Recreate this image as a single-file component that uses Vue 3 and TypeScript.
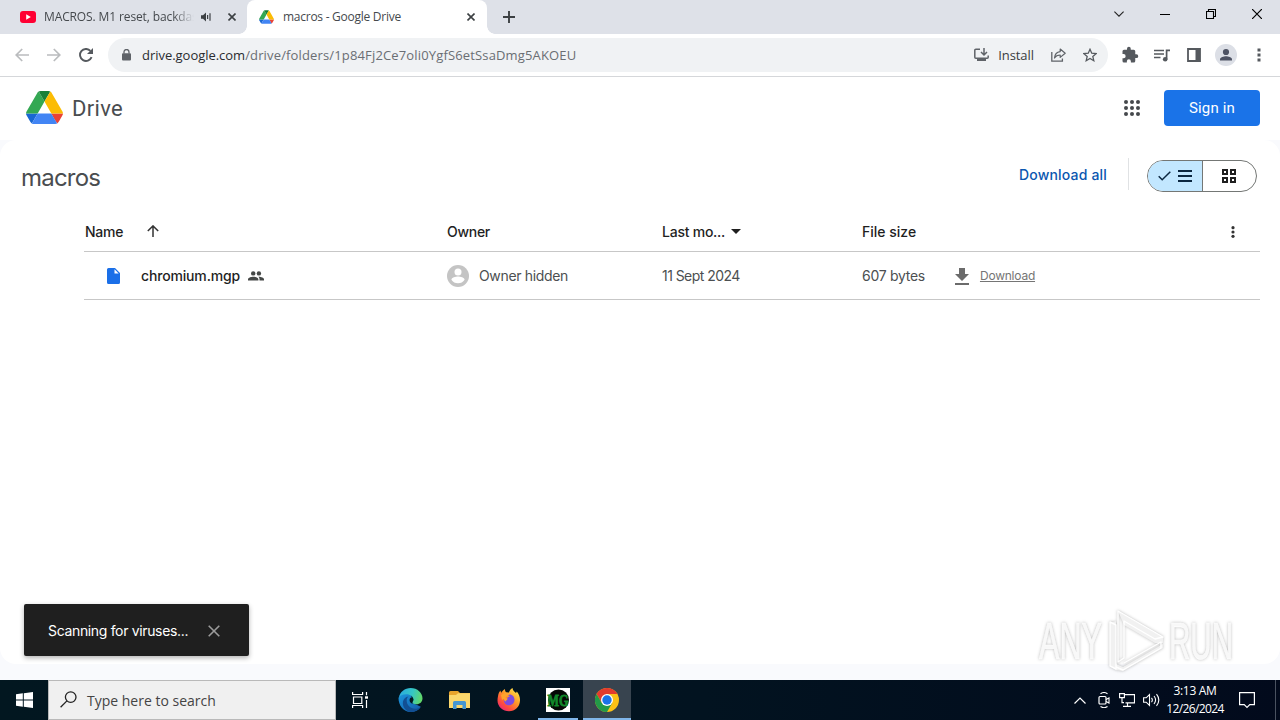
<script setup lang="ts">
import { ref } from 'vue'

interface DriveFile {
  name: string
  owner: string
  modified: string
  size: string
}

const files = ref<DriveFile[]>([
  { name: 'chromium.mgp', owner: 'Owner hidden', modified: '11 Sept 2024', size: '607 bytes' },
])
const dots = [0, 1, 2, 3, 4, 5, 6, 7, 8]
const toastOpen = ref(true)
</script>

<template>
  <div class="screen">
    <header class="tabs">
      <div class="tab first">
        <svg class="yt" width="16" height="12" viewBox="0 0 16 12"><rect width="16" height="12" rx="3" fill="#ff0033" /><path d="M6.2 3.3v5.4L10.8 6z" fill="#fff" /></svg>
        <span class="title t1">MACROS. M1 reset, backdas</span>
        <svg class="snd" width="11" height="10" viewBox="0 0 11 10"><path d="M0 3.2h2L5 .6v8.8L2 6.8H0z" fill="#3c4043" /><path d="M6.6 3v4M9 1.2v7.6" stroke="#3c4043" stroke-width="1.2" /></svg>
        <svg class="x x1" width="8" height="8" viewBox="0 0 8 8"><path d="M.5.5l7 7M7.5.5l-7 7" stroke="#3c4043" stroke-width="1.6" /></svg>
      </div>
      <div class="tab active">
        <svg class="fav" width="15" height="14" viewBox="0 0 87.3 78"><use href="#drive-mark" /></svg>
        <span class="title t2">macros - Google Drive</span>
        <svg class="x x2" width="8" height="8" viewBox="0 0 8 8"><path d="M.5.5l7 7M7.5.5l-7 7" stroke="#3c4043" stroke-width="1.6" /></svg>
      </div>
      <svg class="plus" width="12" height="12" viewBox="0 0 12 12"><path d="M6 0v12M0 6h12" stroke="#3c4043" stroke-width="1.9" /></svg>
      <div class="winctl">
        <svg width="10" height="6" viewBox="0 0 10 6"><path d="M.4.6L5 5.2 9.6.6" fill="none" stroke="#222" stroke-width="1.1" /></svg>
        <svg width="10" height="10" viewBox="0 0 10 10"><path d="M0 5.5h10" stroke="#000" /></svg>
        <svg width="10" height="10" viewBox="0 0 10 10"><path d="M.5 2.5h7v7h-7zM2.5 2.5v-2h7v7h-2" fill="none" stroke="#000" stroke-width="1.1" /></svg>
        <svg width="10" height="10" viewBox="0 0 10 10"><path d="M0 0l10 10M10 0L0 10" stroke="#000" stroke-width="1.2" /></svg>
      </div>
    </header>

    <div class="toolbar">
      <svg class="nav" width="14" height="14" viewBox="0 0 14 14"><path d="M14 7H1.2M7.2 1L1.2 7l6 6" fill="none" stroke="#babcbe" stroke-width="1.7" /></svg>
      <svg class="nav" width="14" height="14" viewBox="0 0 14 14"><path d="M0 7h12.8M6.8 1l6 6-6 6" fill="none" stroke="#babcbe" stroke-width="1.7" /></svg>
      <svg class="nav" width="14" height="14" viewBox="0 0 14 14"><path d="M12.6 9.2A6 6 0 1 1 11.4 2.8" fill="none" stroke="#55595e" stroke-width="1.9" /><path d="M14 0v6H8z" fill="#55595e" /></svg>
      <div class="omnibox">
        <svg class="lock" width="9" height="12" viewBox="0 0 9 12"><rect y="4.2" width="9" height="7.3" rx="1" fill="#5f6368" /><path d="M2 4.6V3a2.5 2.5 0 0 1 5 0v1.600" fill="none" stroke="#5f6368" stroke-width="1.3" /></svg>
        <span class="host">drive.google.com</span><span class="path">/drive/folders/1p84Fj2Ce7oli0YgfS6etSsaDmg5AKOEU</span>
        <svg class="inst" width="15" height="14" viewBox="0 0 15 14"><path d="M6 1.2H1.8a1 1 0 0 0-1 1v7a1 1 0 0 0 1 1h11.4a1 1 0 0 0 1-1V7.4" fill="none" stroke="#5f6368" stroke-width="1.5" /><path d="M10 0v6M7 4l3 3 3-3" fill="none" stroke="#5f6368" stroke-width="1.5" /><path d="M3 11h9v2H3z" fill="#5f6368" /></svg>
        <span class="install">Install</span>
        <svg class="share" width="15" height="14" viewBox="0 0 15 14"><path d="M.8 4v9.2h10.6v-2.6" fill="none" stroke="#5f6368" stroke-width="1.3" /><path d="M9.2 1l5 4.2-5 4.2V7C6.4 7 4.7 8 3.5 10c.3-3.500 2.200-6 5.700-6.400z" fill="none" stroke="#5f6368" stroke-width="1.2" stroke-linejoin="round" /></svg>
        <svg class="star" width="14" height="14" viewBox="0 0 24 24"><path d="M12 2.2l3 6.800 7.400.7-5.600 4.900 1.700 7.200L12 18l-6.500 3.800 1.700-7.200-5.600-4.900L9 9z" fill="none" stroke="#55595e" stroke-width="2.200" /></svg>
      </div>
      <svg class="ext" width="18" height="18" viewBox="0 0 24 24"><path d="M20.500 11H19V7a2 2 0 0 0-2-2h-4V3.500a2.500 2.500 0 0 0-5 0V5H4a2 2 0 0 0-2 2v3.800h1.500a2.700 2.700 0 0 1 0 5.400H2V20a2 2 0 0 0 2 2h3.800v-1.500a2.700 2.700 0 0 1 5.400 0V22H17a2 2 0 0 0 2-2v-4h1.500a2.500 2.500 0 0 0 0-5z" fill="#55595e" /></svg>
      <svg class="media" width="16" height="13" viewBox="0 0 16 13"><path d="M0 1.500h10M0 5h10M0 8.500h6.500" stroke="#55595e" stroke-width="1.600" /><path d="M12.600 10V1.300H16" fill="none" stroke="#55595e" stroke-width="1.700" /><circle cx="11.200" cy="10.300" r="2.300" fill="#55595e" /></svg>
      <svg class="side" width="14" height="14" viewBox="0 0 14 14"><path d="M1 1h12v12H1z" fill="none" stroke="#55595e" stroke-width="1.800" /><path d="M8.500 1H13v12H8.500z" fill="#55595e" /></svg>
      <svg class="profile" width="22" height="22" viewBox="0 0 22 22"><circle cx="11" cy="11" r="11" fill="#dcdfe6" /><circle cx="11" cy="8" r="3.100" fill="#4d5263" /><path d="M5 16.500v-1.300c0-2 3.800-3 6-3s6 1 6 3v1.300z" fill="#4d5263" /></svg>
      <svg class="kebab" width="4" height="14" viewBox="0 0 4 14"><path d="M.5.500h3v3h-3zM.5 5.500h3v3h-3zM.5 10.500h3v3h-3z" fill="#55595e" /></svg>
    </div>

    <div class="gbar">
      <svg class="logo" width="37" height="33" viewBox="0 0 87.3 78">
        <g id="drive-mark">
          <path d="M6.600 66.850l3.850 6.650c.8 1.400 1.950 2.500 3.300 3.300L27.500 53H0c0 1.550.4 3.100 1.200 4.500z" fill="#1967d2" />
          <path d="M43.650 25L29.900 1.200c-1.350.8-2.500 1.900-3.300 3.300L1.200 48.500A9.060 9.060 0 0 0 0 53h27.500z" fill="#34a853" />
          <path d="M73.550 76.800c1.350-.8 2.500-1.900 3.300-3.300l1.600-2.750L86.100 57.500c.8-1.400 1.200-2.950 1.200-4.500H59.800l5.850 11.500z" fill="#ea4335" />
          <path d="M43.650 25L57.400 1.200C56.050.4 54.500 0 52.900 0H34.400c-1.600 0-3.150.45-4.500 1.200z" fill="#188038" />
          <path d="M59.800 53H27.500L13.750 76.800c1.350.8 2.900 1.200 4.500 1.200h50.800c1.600 0 3.150-.45 4.500-1.200z" fill="#4285f4" />
          <path d="M73.400 26.500L60.700 4.500c-.8-1.400-1.950-2.500-3.300-3.300L43.650 25l16.150 28h27.450c0-1.550-.4-3.100-1.200-4.500z" fill="#fbbc04" />
        </g>
      </svg>
      <span class="brand">Drive</span>
      <svg class="apps" width="16" height="16" viewBox="0 0 16 16"><circle v-for="d in dots" :key="d" :cx="2 + (d % 3) * 6" :cy="2 + Math.floor(d / 3) * 6" r="2" fill="#45484c" /></svg>
      <button class="signin">Sign in</button>
    </div>

    <div class="page">
      <main class="panel">
        <div class="heading">
          <h1>macros</h1>
          <a class="dlall">Download all</a>
          <i class="rule"></i>
          <div class="toggle">
            <div class="half on">
              <svg width="13" height="10" viewBox="0 0 13 10"><path d="M.7 5.200l3.500 3.500L12.300.8" fill="none" stroke="#0b2740" stroke-width="1.500" /></svg>
              <svg width="14" height="12" viewBox="0 0 14 12"><path d="M0 1h14M0 6h14M0 11h14" stroke="#0b2740" stroke-width="2" /></svg>
            </div>
            <div class="half">
              <svg width="14" height="14" viewBox="0 0 14 14"><path d="M1 1h4v4H1zM9 1h4v4H9zM1 9h4v4H1zM9 9h4v4H9z" fill="none" stroke="#1f1f1f" stroke-width="2" /></svg>
            </div>
          </div>
        </div>

        <div class="table">
          <div class="row head">
            <div class="cell"><span class="h-name">Name</span>
              <svg class="up" width="12" height="12" viewBox="0 0 12 12"><path d="M6 12V1M.8 6L6 .9 11.200 6" fill="none" stroke="#333" stroke-width="1.500" /></svg>
            </div>
            <div class="cell"><span class="h-owner">Owner</span></div>
            <div class="cell"><span class="h-mod">Last mo...</span>
              <svg class="down" width="10" height="5" viewBox="0 0 10 5"><path d="M0 0h10L5 5z" fill="#1f1f1f" /></svg>
            </div>
            <div class="cell"><span class="h-size">File size</span></div>
            <div class="cell more"><svg width="4" height="12" viewBox="0 0 4 12"><circle cx="2" cy="1.700" r="1.600" fill="#333" /><circle cx="2" cy="6" r="1.600" fill="#333" /><circle cx="2" cy="10.300" r="1.600" fill="#333" /></svg></div>
          </div>
          <div v-for="f in files" :key="f.name" class="row">
            <div class="cell">
              <svg class="doc" width="13" height="16" viewBox="0 0 13 16"><path d="M1.500 0H8l5 5v9.500a1.500 1.500 0 0 1-1.500 1.500h-10A1.500 1.500 0 0 1 0 14.500v-13A1.500 1.500 0 0 1 1.500 0z" fill="#1a6fe8" /><path d="M7.500 1.300V5.500h4.200z" fill="#fff" /></svg>
              <span class="fname">{{ f.name }}</span>
              <svg class="people" width="16" height="10" viewBox="0 0 16 10"><circle cx="5.200" cy="2.400" r="2.200" fill="#444746" /><circle cx="10.900" cy="2.400" r="2.200" fill="#444746" /><path d="M0 9.600V8.200C0 6.600 3.300 5.700 5.200 5.700s5.200.9 5.200 2.500v1.400zM11.500 9.600V8c0-.9-.5-1.600-1.100-2.200C12.500 5.600 16 6.600 16 8.200v1.400z" fill="#444746" /></svg>
            </div>
            <div class="cell">
              <svg class="avatar" width="22" height="22" viewBox="0 0 22 22"><circle cx="11" cy="11" r="11" fill="#c4c4c4" /><circle cx="11" cy="7" r="3.500" fill="#fff" /><path d="M4.400 14.700c0-2.200 4.400-3.300 6.600-3.300s6.600 1.100 6.600 3.300A8 8 0 0 1 11 18.300a8 8 0 0 1-6.600-3.600z" fill="#fff" /></svg>
              <span class="owner">{{ f.owner }}</span>
            </div>
            <div class="cell"><span class="date">{{ f.modified }}</span></div>
            <div class="cell">
              <span class="size">{{ f.size }}</span>
              <svg class="dlicon" width="14" height="17" viewBox="0 0 14 17"><path d="M4 0h6v6h4l-7 7-7-7h4zM0 15h14v2H0z" fill="#6b6b6b" /></svg>
              <a class="dl">Download</a>
            </div>
            <div class="cell"></div>
          </div>
        </div>
      </main>
    </div>

    <div v-if="toastOpen" class="toast">
      <span>Scanning for viruses...</span>
      <svg width="12" height="12" viewBox="0 0 12 12" @click="toastOpen = false"><path d="M.7.7l10.600 10.600M11.300.7L.7 11.300" stroke="#9b9b9b" stroke-width="1.600" /></svg>
    </div>

    <svg class="watermark" width="210" height="74" viewBox="0 0 210 74">
      <g class="wm-text">
        <text x="9" y="53" textLength="63" lengthAdjust="spacingAndGlyphs">ANY</text>
        <text x="139" y="53" textLength="64" lengthAdjust="spacingAndGlyphs">RUN</text>
      </g>
      <g class="wm-mark">
        <path class="wm-face" d="M80 17l6-2V58l7 3 40-23v4L93 65l-7-1-6-4zM88 5l45 26v6l-8 0-31-18z" />
        <path d="M80 16v44l6 3V19zM88 5v51l6-4V15l31 18 8-2zM94 57l37-21v6L93 64l-7-3" />
      </g>
    </svg>

    <footer class="taskbar">
      <div class="start"><svg width="17" height="16" viewBox="0 0 17 16"><path d="M0 2.300L6.800 1.300v6.300H0zM7.800 1.150L17 0v7.600H7.800zM0 8.500h6.800v6.300L0 13.800zM7.800 8.500H17V16l-9.200-1.200z" fill="#fff" /></svg></div>
      <div class="search">
        <svg width="17" height="17" viewBox="0 0 17 17"><circle cx="10.700" cy="6.100" r="5.300" fill="none" stroke="#222" stroke-width="1.300" /><path d="M6.900 9.900L.6 16.200" stroke="#222" stroke-width="1.300" /></svg>
        <span>Type here to search</span>
      </div>
      <div class="app">
        <svg class="tv" width="17" height="16" viewBox="0 0 17 16"><path d="M.6 0v2.500h10V0M1.500 5h8.300v6.500H1.500zM.6 16v-2.500h10V16M14.500 0v3.300M14.500 8v8" fill="none" stroke="#fff" stroke-width="1.200" /><path d="M13 4.300h3v2.400h-3z" fill="#fff" /></svg>
      </div>
      <div class="app edge">
        <svg width="25" height="24" viewBox="0 0 25 24">
          <defs>
            <linearGradient id="eg1" x1="0" y1=".3" x2="1" y2=".5"><stop offset="0" stop-color="#2aa9e0" /><stop offset=".55" stop-color="#35c6c5" /><stop offset="1" stop-color="#62d868" /></linearGradient>
            <linearGradient id="eg2" x1="0" y1="0" x2="1" y2="1"><stop offset="0" stop-color="#1c96dd" /><stop offset="1" stop-color="#135aa8" /></linearGradient>
          </defs>
          <path d="M.5 10C.5 17.500 5.500 24 12.500 24c4.500 0 8-2 10.300-5.300l-8-3.700L13 6 4 5z" fill="url(#eg2)" />
          <path d="M.7 10C2 3.800 6.800 0 12.600 0 19.500 0 24.500 5 24.500 10.300c0 3.700-2.700 6-6 6-2.600 0-4.200-1-4.200-2 0-.7 1-1.200 1-2.800 0-2.700-3-5.200-6.900-5.200C4.600 6.300 1.700 7.800.7 10z" fill="url(#eg1)" />
          <path d="M8.700 12.500c0 4.500 3.500 8.200 8.300 8.200 2.300 0 4.300-.6 5.800-1.800-2 3.200-5.800 5.100-10.300 5.100-5-1-8.500-5.500-7.500-10.500.5-2.500 2.500-4.700 5.500-5-1.200 1-1.800 2.300-1.800 4z" fill="#124f93" />
          <path d="M11.600 12c0-1.300.7-2.400 1.800-2.400 1.300 0 2 1 2 2.200 0 1.300-1 1.800-1 2.600 0 .7.800 1.500 2.300 1.800-2.800 0-5.100-1.700-5.100-4.200z" fill="#021720" />
        </svg>
      </div>
      <div class="app">
        <svg width="22" height="18" viewBox="0 0 22 18"><path d="M0 1.500A1.500 1.500 0 0 1 1.500 0H9l2 2h10v5H0z" fill="#e8a42c" /><path d="M0 4h7l2-1.800h12V17H0z" fill="#fbd76c" /><path d="M4 18v-6.500A1.500 1.500 0 0 1 5.500 10h10a1.500 1.500 0 0 1 1.500 1.500V18h-3.500v-4h-6v4z" fill="#4596d2" /></svg>
      </div>
      <div class="app">
        <svg width="24" height="24" viewBox="0 0 24 24">
          <defs><linearGradient id="ff1" x1=".9" y1=".1" x2=".2" y2="1"><stop offset="0" stop-color="#ffe14a" /><stop offset=".4" stop-color="#ff9a28" /><stop offset=".75" stop-color="#ff4b3e" /><stop offset="1" stop-color="#e8247e" /></linearGradient></defs>
          <path d="M1 8.200C1.200 5.700 2.400 3.500 3.500 2.500c.1 1 .3 1.700.8 2.300C5 3.600 6.500 1.800 8 1c-.2 1.200.2 2.300 1 3.200l3 .3C12.300 2.800 14 .7 15.500 0c.3 2.600 2 3.500 3.500 5l.8-1.500c2 2.500 3.400 5.500 3.200 9C22.800 19 18 23.300 12 23.300S.5 18.800.5 12.500C.5 11 .7 9.500 1 8.200z" fill="url(#ff1)" />
          <path d="M6.800 12c.2 3.300 2.300 5.300 5.200 5.300 3.300 0 5.500-2.500 5.500-5.500 0-2.700-1.700-4.800-4-5.300-1.200-.2-2 .1-2.700.7.700.1 1.700.6 2 1.300-1.500 0-2.500 1-2.800 2-.8 1-2.300.4-3.200 1.500z" fill="#7d4be0" />
          <path d="M6.800 10.500c1.500-.9 3-.2 4 .3-.5 1.200-1.500 1.500-2 2.200-.3 1.200-1.500.2-2-2.500zM4 7l5-2.500 3.500 2.300c-2 .4-3.500 1.600-3.800 3L5 12z" fill="#ffa32b" />
        </svg>
      </div>
      <div class="app open">
        <svg width="24" height="24" viewBox="0 0 24 24"><path fill="#fff" d="M0 0h24v24H0z" /><circle cx="12.500" cy="12" r="10.500" fill="#050805" /><text x="1.500" y="17.500" class="mg" textLength="21" lengthAdjust="spacingAndGlyphs">MG</text></svg>
      </div>
      <div class="app current">
        <svg width="24" height="24" viewBox="0 0 24 24"><circle cx="12" cy="12" r="12" fill="#fbc116" /><path d="M1.600 6A12 12 0 0 1 22.400 6H12L6.800 15z" fill="#e33b2e" /><path d="M1.600 6A12 12 0 0 0 12 24l5.200-9-10.400 0z" fill="#229a48" /><circle cx="12" cy="12" r="6" fill="#fff" /><circle cx="12" cy="12" r="4.700" fill="#1a73e8" /></svg>
      </div>
      <div class="tray">
        <svg width="12" height="7" viewBox="0 0 12 7"><path d="M.5 6.500L6 1l5.500 5.500" fill="none" stroke="#fff" stroke-width="1.200" /></svg>
        <svg class="meet" width="12" height="16" viewBox="0 0 12 16"><rect x="1" y="4.500" width="7" height="7.500" rx="1" fill="none" stroke="#fff" stroke-width="1.200" /><path d="M8 7.500l3-1.500v5L8 9.500M2.500 1.800C4.500.3 7.500.3 9.500 1.800M2.500 14.500c2 1.400 5 1.400 7 0" fill="none" stroke="#fff" stroke-width="1.100" /></svg>
        <svg class="net" width="16" height="14" viewBox="0 0 16 14"><path d="M5.500 1.600h10v8.300h-9M4 13.400h8M8.500 10v3.400M.6.600h4.800v4H.6zM3 4.600v5h2" fill="none" stroke="#fff" stroke-width="1.150" /></svg>
        <svg class="vol" width="17" height="14" viewBox="0 0 17 14"><path d="M.6 4.800h2.600L6.500 1.500v11L3.200 9.200H.6zM8.500 4.800c1 1.300 1 3.100 0 4.400M11 3c1.900 2.400 1.900 5.600 0 8M13.500 1.200c2.800 3.500 2.800 8.100 0 11.600" fill="none" stroke="#fff" stroke-width="1.100" /></svg>
        <div class="clock"><span class="time">3:13 AM</span><span class="day">12/26/2024</span></div>
        <svg class="note" width="16" height="17" viewBox="0 0 16 17"><path d="M.6.600h14.800v12h-4.600L8 15.400l-2.800-2.800H.6z" fill="none" stroke="#fff" stroke-width="1.200" /></svg>
        <i class="peek"></i>
      </div>
    </footer>
  </div>
</template>

<style>
html, body { margin: 0; overflow: hidden; }
</style>

<style scoped>
.screen { position: relative; width: 1280px; height: 720px; display: flex; flex-direction: column; overflow: hidden; background: #fff; font-family: Inter, "Liberation Sans", sans-serif; }
.screen * { box-sizing: border-box; }
svg { flex: none; display: block; }
span, a { white-space: nowrap; }

.tabs { height: 34px; flex: none; display: flex; align-items: center; background: #dee1e8; font: 12px "Open Sans", "Noto Sans", sans-serif; color: #45494d; }
.tab { height: 34px; display: flex; align-items: center; }
.first { width: 247px; padding-left: 20px; }
.title { overflow: hidden; line-height: 18px; }
.t1 { width: 150px; margin-left: 8px; letter-spacing: -.12px; -webkit-mask-image: linear-gradient(90deg, #000 86%, transparent 100%); mask-image: linear-gradient(90deg, #000 86%, transparent 100%); }
.snd { margin-left: 7px; }
.x1 { margin-left: 16px; }
.active { position: relative; width: 240px; padding-left: 12px; background: #fff; border-radius: 8px 8px 0 0; color: #45494d; }
.active::before, .active::after { content: ""; position: absolute; bottom: 0; width: 8px; height: 8px; }
.active::before { left: -8px; background: radial-gradient(circle at 0 0, transparent 7.5px, #fff 8px); }
.active::after { right: -8px; background: radial-gradient(circle at 100% 0, transparent 7.5px, #fff 8px); }
.t2 { width: 180px; margin-left: 9px; letter-spacing: -.26px; }
.x2 { margin-left: 4px; }
.plus { margin-left: 16px; }
.winctl { margin-left: auto; align-self: flex-start; height: 28px; display: flex; align-items: center; gap: 36px; padding-right: 18px; }

.toolbar { height: 43px; flex: none; display: flex; align-items: center; background: #fff; border-bottom: 1px solid #d5d7da; padding-left: 15px; }
.nav { margin-right: 18px; }
.nav:nth-child(3) { margin-right: 15px; }
.omnibox { width: 1000px; height: 34px; border-radius: 17px; background: #f0f2f4; display: flex; align-items: center; padding-left: 13px; font: 13px "Open Sans", "Noto Sans", sans-serif; color: #2a2c30; }
.lock { margin-left: 1px; }
.host { margin-left: 11px; letter-spacing: -.03px; }
.path { color: #6a6e73; letter-spacing: .15px; width: 333px; }
.inst { margin-left: 396px; }
.install { margin-left: 9px; width: 37px; letter-spacing: -.05px; color: #3a3d41; }
.share { margin-left: 16px; }
.star { margin-left: 17px; }
.ext { margin-left: 13px; }
.media { margin-left: 15px; }
.side { margin-left: 17px; }
.profile { margin-left: 14px; }
.kebab { margin-left: 20px; }

.gbar { height: 63px; flex: none; display: flex; align-items: center; padding: 0 20px 2px 26px; background: #fff; }
.brand { margin: 1px 0 0 9px; font-size: 22px; font-family: Roboto, sans-serif; letter-spacing: .3px; color: #4a4d50; }
.apps { margin-left: auto; }
.signin { margin-left: 24px; width: 96px; height: 36px; border: 0; border-radius: 4px; background: #1a73e8; color: #fff; font: 400 15px Roboto, sans-serif; letter-spacing: .18px; padding: 0; }

.page { height: 540px; flex: none; background: #f9fafd; padding-bottom: 16px; }
.panel { height: 524px; background: #fff; border-radius: 16px; }
.heading { height: 72px; display: flex; align-items: center; padding-right: 23px; }
h1 { margin: 2px 0 0 21px; font: 400 24px Inter, sans-serif; letter-spacing: -.78px; color: #4a4d50; }
.dlall { margin-left: auto; margin-top: -3px; font-size: 14px; font-weight: 500; letter-spacing: .18px; color: #0b57b0; }
.rule { width: 1px; height: 32px; margin: -4px 18px 0 21px; background: #e0e2e4; }
.toggle { width: 110px; height: 32px; display: flex; border: 1px solid #747775; border-radius: 16px; overflow: hidden; }
.half { flex: 1; display: flex; align-items: center; justify-content: center; gap: 7px; padding-right: 2px; }
.on { flex: none; width: 55px; background: #c2e7ff; border-right: 1px solid #747775; padding: 0; }

.table { margin: 0 20px 0 84px; font-size: 14px; }
.row { height: 48px; display: grid; grid-template-columns: 363px 215px 200px 346px 1fr; border-bottom: 1px solid #c7c7c7; color: #4c4f51; }
.head { height: 40px; color: #1f1f1f; font-weight: 500; }
.cell { display: flex; align-items: center; min-width: 0; }
.h-name { margin-left: 1px; letter-spacing: -.28px; }
.up { margin: -2px 0 0 24px; }
.h-owner { letter-spacing: -.28px; }
.h-mod { letter-spacing: -.24px; }
.down { margin-left: 6px; }
.more { padding-left: 23px; }
.doc { margin-left: 23px; }
.fname { margin-left: 21px; color: #1f1f1f; font-weight: 500; letter-spacing: -.16px; }
.people { margin-left: 8px; }
.owner { margin-left: 10px; letter-spacing: -.34px; }
.date { letter-spacing: -.55px; }
.size { letter-spacing: -.28px; }
.dlicon { margin: 1px 0 0 30px; }
.dl { margin-left: 11px; font-size: 12px; letter-spacing: -.22px; color: #757575; text-decoration: underline; }

.toast { position: absolute; left: 24px; top: 604px; width: 225px; height: 52px; padding-left: 24px; display: flex; align-items: center; gap: 20px; background: #1f1f1f; color: #fff; border-radius: 2px; font-size: 14px; letter-spacing: -.34px; box-shadow: 0 2px 5px rgba(0, 0, 0, .3); }
.toast span { width: 140px; margin-top: 1px; }
.toast svg { margin-top: 2px; }

.watermark { position: absolute; left: 1030px; top: 606px; overflow: visible; filter: drop-shadow(0 0 1.5px rgba(90, 90, 90, .42)); }
.wm-text { font: 400 52px "Liberation Sans", sans-serif; fill: #f8f8f8; stroke: #fff; stroke-width: .6; }
.wm-mark { fill: none; stroke: #fff; stroke-width: 1.4; stroke-linejoin: round; }
.wm-face { fill: #f1f1f1; stroke: none; }

.taskbar { height: 40px; flex: none; display: flex; background: linear-gradient(90deg, #021720, #021320 55%, #020a1c); color: #fff; font-family: "Open Sans", "Noto Sans", sans-serif; }
.start { width: 48px; display: flex; align-items: center; justify-content: center; }
.search { width: 288px; background: #f0f0f0; border: 1px solid #b9b9b9; display: flex; align-items: center; padding-left: 11px; gap: 10px; color: #444; font-size: 14px; letter-spacing: 0; }
.search svg { margin-top: -1px; }
.app { width: 48px; margin-right: 1.4px; display: flex; align-items: center; justify-content: center; }
.tv { margin-left: 1px; }
.edge { margin-left: 1.5px; }
.edge + .app { margin-left: -.5px; }
.open { margin-left: -1px; background: linear-gradient(#80b6ea, #80b6ea) center bottom / 40px 2px no-repeat; }
.current { background: #38444f; box-shadow: inset 0 -2px #80b6ea; margin-right: 0; }
.mg { font: 700 16px "Liberation Serif", serif; fill: #12882a; stroke: #12882a; stroke-width: .8; }
.tray { margin-left: auto; display: flex; align-items: center; }
.meet { margin-left: 12px; }
.net { margin-left: 9px; }
.vol { margin-left: 8px; }
.clock { width: 62px; margin: -1px 0 0 4px; display: flex; flex-direction: column; align-items: center; font-size: 12px; line-height: 18px; }
.time { letter-spacing: -.32px; }
.day { letter-spacing: -.6px; }
.note { margin-left: 13px; margin-top: 1px; }
.peek { width: 1px; height: 40px; margin-left: 20px; margin-right: 4px; background: #4a5260; }
</style>
